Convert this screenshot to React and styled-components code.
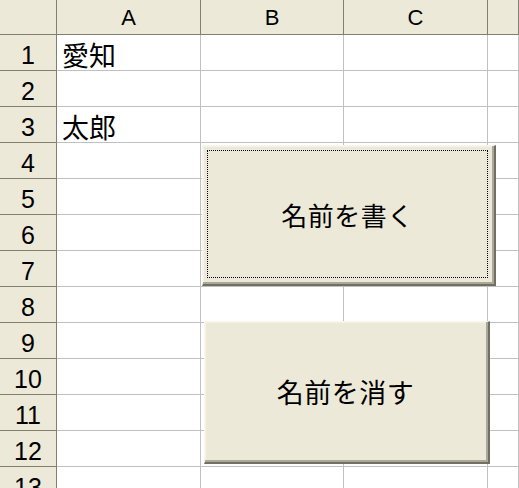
import React from "react";
import styled, { createGlobalStyle } from "styled-components";

const GlobalStyle = createGlobalStyle`
  html, body {
    margin: 0;
    padding: 0;
    background: #ffffff;
    overflow: hidden;
  }
`;

const Sheet = styled.div`
  position: relative;
  width: 519px;
  height: 488px;
  overflow: hidden;
  background: #ffffff;
  font-family: "Liberation Sans", "Noto Sans CJK JP", sans-serif;
`;

const Grid = styled.div`
  display: grid;
  grid-template-columns: 57px 144px 143px 144px 1fr;
  grid-auto-rows: 36px;
  grid-template-rows: 35px;
`;

const Corner = styled.div`
  background: #ece9d8;
  border-right: 1px solid #807f72;
  border-bottom: 1px solid #807f72;
  box-sizing: border-box;
`;

const ColHead = styled.div`
  background: #ece9d8;
  border-right: 1px solid #807f72;
  border-bottom: 1px solid #807f72;
  box-sizing: border-box;
  display: flex;
  align-items: center;
  justify-content: center;
  font-size: 22px;
  color: #000;
  padding-top: 1px;
`;

const RowHead = styled.div`
  background: #ece9d8;
  border-right: 1px solid #807f72;
  border-bottom: 1px solid #807f72;
  box-sizing: border-box;
  display: flex;
  align-items: center;
  justify-content: center;
  font-size: 25px;
  color: #000;
  padding-top: 6px;
`;

const Cell = styled.div`
  border-right: 1px solid #c0c0c0;
  border-bottom: 1px solid #c0c0c0;
  box-sizing: border-box;
  display: flex;
  align-items: flex-end;
  padding: 0 0 2px 5px;
  font-family: "Noto Sans CJK JP", sans-serif;
  font-size: 27px;
  line-height: 1;
  color: #000;
`;

const Button = styled.div`
  position: absolute;
  left: ${({ $x }) => $x}px;
  top: ${({ $y }) => $y}px;
  width: ${({ $w }) => $w}px;
  height: ${({ $h }) => $h}px;
  box-sizing: border-box;
  background: #ece9d8;
  border-top: 1px solid #f7f5ee;
  border-left: 1px solid #f7f5ee;
  border-right: 2px solid #716f64;
  border-bottom: 2px solid #716f64;
  box-shadow: inset -2px -2px 0 #aca899, inset 1px 1px 0 #f4f1e7;
  display: flex;
  align-items: center;
  justify-content: center;
  padding: 4px;
`;

const Focus = styled.div`
  flex: 1;
  align-self: stretch;
  display: flex;
  align-items: center;
  justify-content: center;
  border: 1px dotted ${({ $on }) => ($on ? "#000" : "transparent")};
  margin: 0 2px 2px 0;
  font-family: "Noto Sans CJK JP", sans-serif;
  font-size: ${({ $size }) => $size}px;
  color: #000;
  letter-spacing: 0.5px;
`;

const cols = ["A", "B", "C", ""];
const values = { 1: "愛知", 3: "太郎" };

export default function App() {
  const rows = Array.from({ length: 13 }, (_, i) => i + 1);
  return (
    <Sheet>
      <GlobalStyle />
      <Grid>
        <Corner />
        {cols.map((c, i) => (
          <ColHead key={i}>{c}</ColHead>
        ))}
        {rows.map((r) => (
          <React.Fragment key={r}>
            <RowHead>{r}</RowHead>
            <Cell>{values[r] || ""}</Cell>
            <Cell />
            <Cell />
            <Cell />
          </React.Fragment>
        ))}
      </Grid>
      <Button $x={202} $y={145} $w={294} $h={141}>
        <Focus $on $size={26}>名前を書く</Focus>
      </Button>
      <Button $x={204} $y={321} $w={286} $h={143}>
        <Focus $size={27}>名前を消す</Focus>
      </Button>
    </Sheet>
  );
}
